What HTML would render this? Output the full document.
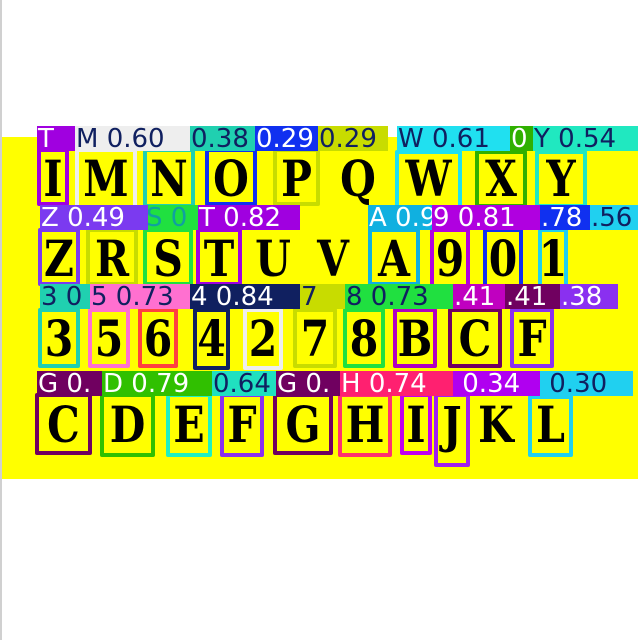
<!DOCTYPE html><html><head><style>
body{margin:0;width:640px;height:640px;background:#fff;position:relative;overflow:hidden}
.gl{position:absolute;left:0;top:0;width:2px;height:640px;background:#d0d0d0}
.y{position:absolute;left:2px;top:137px;width:636px;height:342px;background:#ffff00}
.b{position:absolute;box-sizing:border-box;border:4px solid;border-radius:2px}
.c{position:absolute;font-family:"DejaVu Serif","Liberation Serif",serif;font-weight:bold;color:#000;font-size:50px;line-height:54px;text-align:center;transform:scaleX(0.82)}
.l{position:absolute;font-family:"DejaVu Sans","Liberation Sans",sans-serif;font-size:26px;line-height:26px;height:25px;white-space:nowrap;overflow:hidden;padding-left:1px;box-sizing:border-box}
</style></head><body>
<div class="gl"></div><div class="y"></div>

<div class="b" style="left:37px;top:148px;width:32px;height:58px;border-color:#a000e0"></div>
<div class="b" style="left:75px;top:148px;width:62px;height:62px;border-color:#eeeeee"></div>
<div class="b" style="left:143px;top:148px;width:52px;height:60px;border-color:#20d0b0"></div>
<div class="b" style="left:205px;top:148px;width:52px;height:58px;border-color:#1030f0"></div>
<div class="b" style="left:273px;top:148px;width:47px;height:58px;border-color:#c8dc00"></div>
<div class="b" style="left:395px;top:150px;width:67px;height:62px;border-color:#20e0f0"></div>
<div class="b" style="left:475px;top:150px;width:52px;height:58px;border-color:#30b000"></div>
<div class="b" style="left:535px;top:150px;width:52px;height:58px;border-color:#20e8c0"></div>
<div class="c" style="left:37px;top:152px;width:32px">I</div>
<div class="c" style="left:72px;top:152px;width:68px">M</div>
<div class="c" style="left:140px;top:152px;width:58px">N</div>
<div class="c" style="left:202px;top:152px;width:58px">O</div>
<div class="c" style="left:270px;top:152px;width:53px">P</div>
<div class="c" style="left:325px;top:152px;width:66px">Q</div>
<div class="c" style="left:392px;top:152px;width:73px">W</div>
<div class="c" style="left:472px;top:152px;width:58px">X</div>
<div class="c" style="left:532px;top:152px;width:58px">Y</div>
<div class="l" style="left:37px;top:126px;width:38px;background:#a000e0;color:#fff">T</div>
<div class="l" style="left:75px;top:126px;width:115px;background:#eeeeee;color:#102060">M 0.60</div>
<div class="l" style="left:190px;top:126px;width:65px;background:#20d0b0;color:#102060">0.38</div>
<div class="l" style="left:255px;top:126px;width:63px;background:#1030f0;color:#fff">0.29</div>
<div class="l" style="left:318px;top:126px;width:70px;background:#c8dc00;color:#102060">0.29</div>
<div class="l" style="left:397px;top:126px;width:113px;background:#20e0f0;color:#102060">W 0.61</div>
<div class="l" style="left:510px;top:126px;width:23px;background:#30b000;color:#fff">0</div>
<div class="l" style="left:533px;top:126px;width:105px;background:#20e8c0;color:#102060">Y 0.54</div>

<div class="b" style="left:38px;top:228px;width:42px;height:58px;border-color:#7b3af0"></div>
<div class="b" style="left:86px;top:228px;width:52px;height:58px;border-color:#c8dc00"></div>
<div class="b" style="left:143px;top:228px;width:50px;height:58px;border-color:#20e040"></div>
<div class="b" style="left:196px;top:228px;width:46px;height:58px;border-color:#a000e0"></div>
<div class="b" style="left:368px;top:228px;width:52px;height:58px;border-color:#10b0e0"></div>
<div class="b" style="left:430px;top:228px;width:40px;height:66px;border-color:#b000e0"></div>
<div class="b" style="left:483px;top:228px;width:40px;height:66px;border-color:#1030f0"></div>
<div class="b" style="left:538px;top:228px;width:30px;height:60px;border-color:#20d0f0"></div>
<div class="c" style="left:35px;top:232px;width:48px">Z</div>
<div class="c" style="left:83px;top:232px;width:58px">R</div>
<div class="c" style="left:140px;top:232px;width:56px">S</div>
<div class="c" style="left:193px;top:232px;width:52px">T</div>
<div class="c" style="left:245px;top:232px;width:56px">U</div>
<div class="c" style="left:300px;top:232px;width:66px">V</div>
<div class="c" style="left:365px;top:232px;width:58px">A</div>
<div class="c" style="left:427px;top:232px;width:46px">9</div>
<div class="c" style="left:480px;top:232px;width:46px">0</div>
<div class="c" style="left:535px;top:232px;width:36px">1</div>
<div class="l" style="left:145px;top:205px;width:55px;background:#20e040;color:#10a0a0">S 0</div>
<div class="l" style="left:40px;top:205px;width:108px;background:#7b3af0;color:#fff">Z 0.49</div>
<div class="l" style="left:198px;top:205px;width:102px;background:#a000e0;color:#fff">T 0.82</div>
<div class="l" style="left:368px;top:205px;width:67px;background:#10b0e0;color:#fff">A 0.9</div>
<div class="l" style="left:432px;top:205px;width:108px;background:#b000e0;color:#fff">9 0.81</div>
<div class="l" style="left:540px;top:205px;width:50px;background:#1030f0;color:#fff">.78</div>
<div class="l" style="left:590px;top:205px;width:48px;background:#20d0f0;color:#102060">.56</div>

<div class="b" style="left:38px;top:308px;width:42px;height:60px;border-color:#20d0b0"></div>
<div class="b" style="left:88px;top:308px;width:42px;height:60px;border-color:#ff70d0"></div>
<div class="b" style="left:138px;top:308px;width:40px;height:60px;border-color:#ff4040"></div>
<div class="b" style="left:193px;top:308px;width:37px;height:62px;border-color:#102060"></div>
<div class="b" style="left:243px;top:308px;width:40px;height:62px;border-color:#eeeeee"></div>
<div class="b" style="left:293px;top:308px;width:44px;height:60px;border-color:#c8dc00"></div>
<div class="b" style="left:343px;top:308px;width:42px;height:60px;border-color:#20e040"></div>
<div class="b" style="left:393px;top:308px;width:44px;height:60px;border-color:#b000c0"></div>
<div class="b" style="left:448px;top:308px;width:54px;height:60px;border-color:#700060"></div>
<div class="b" style="left:510px;top:308px;width:44px;height:60px;border-color:#8a30f0"></div>
<div class="c" style="left:35px;top:312px;width:48px">3</div>
<div class="c" style="left:85px;top:312px;width:48px">5</div>
<div class="c" style="left:135px;top:312px;width:46px">6</div>
<div class="c" style="left:190px;top:312px;width:43px">4</div>
<div class="c" style="left:240px;top:312px;width:46px">2</div>
<div class="c" style="left:290px;top:312px;width:50px">7</div>
<div class="c" style="left:340px;top:312px;width:48px">8</div>
<div class="c" style="left:390px;top:312px;width:50px">B</div>
<div class="c" style="left:445px;top:312px;width:60px">C</div>
<div class="c" style="left:507px;top:312px;width:50px">F</div>
<div class="l" style="left:40px;top:284px;width:50px;background:#20d0b0;color:#102060">3 0</div>
<div class="l" style="left:90px;top:284px;width:100px;background:#ff70d0;color:#102060">5 0.73</div>
<div class="l" style="left:190px;top:284px;width:110px;background:#102060;color:#fff">4 0.84</div>
<div class="l" style="left:300px;top:284px;width:45px;background:#c8dc00;color:#102060">7</div>
<div class="l" style="left:345px;top:284px;width:108px;background:#20e040;color:#102060">8 0.73</div>
<div class="l" style="left:453px;top:284px;width:52px;background:#c000c0;color:#fff">.41</div>
<div class="l" style="left:505px;top:284px;width:55px;background:#700060;color:#fff">.41</div>
<div class="l" style="left:560px;top:284px;width:58px;background:#8a30f0;color:#fff">.38</div>

<div class="b" style="left:35px;top:393px;width:57px;height:62px;border-color:#700060"></div>
<div class="b" style="left:100px;top:393px;width:55px;height:64px;border-color:#30c000"></div>
<div class="b" style="left:166px;top:393px;width:46px;height:64px;border-color:#20f0c0"></div>
<div class="b" style="left:220px;top:393px;width:44px;height:64px;border-color:#8a30f0"></div>
<div class="b" style="left:273px;top:393px;width:60px;height:62px;border-color:#700060"></div>
<div class="b" style="left:338px;top:393px;width:54px;height:64px;border-color:#ff3070"></div>
<div class="b" style="left:400px;top:393px;width:32px;height:62px;border-color:#c000f0"></div>
<div class="b" style="left:434px;top:393px;width:36px;height:74px;border-color:#a020f0"></div>
<div class="b" style="left:528px;top:395px;width:45px;height:62px;border-color:#20d0f0"></div>
<div class="c" style="left:32px;top:398px;width:63px">C</div>
<div class="c" style="left:97px;top:398px;width:61px">D</div>
<div class="c" style="left:163px;top:398px;width:52px">E</div>
<div class="c" style="left:217px;top:398px;width:50px">F</div>
<div class="c" style="left:270px;top:398px;width:66px">G</div>
<div class="c" style="left:335px;top:398px;width:60px">H</div>
<div class="c" style="left:397px;top:398px;width:38px">I</div>
<div class="c" style="left:431px;top:398px;width:42px">J</div>
<div class="c" style="left:467px;top:398px;width:58px">K</div>
<div class="c" style="left:525px;top:398px;width:51px">L</div>
<div class="l" style="left:37px;top:371px;width:68px;background:#700060;color:#fff">G 0.</div>
<div class="l" style="left:212px;top:371px;width:68px;background:#20e0c0;color:#102060">0.64</div>
<div class="l" style="left:102px;top:371px;width:110px;background:#30c000;color:#fff">D 0.79</div>
<div class="l" style="left:276px;top:371px;width:69px;background:#700060;color:#fff">G 0.</div>
<div class="l" style="left:340px;top:371px;width:113px;background:#ff2070;color:#fff">H 0.74</div>
<div class="l" style="left:453px;top:371px;width:87px;background:#b000f0;color:#fff">&nbsp;0.34</div>
<div class="l" style="left:540px;top:371px;width:93px;background:#20d0f0;color:#102060">&nbsp;0.30</div>
</body></html>
